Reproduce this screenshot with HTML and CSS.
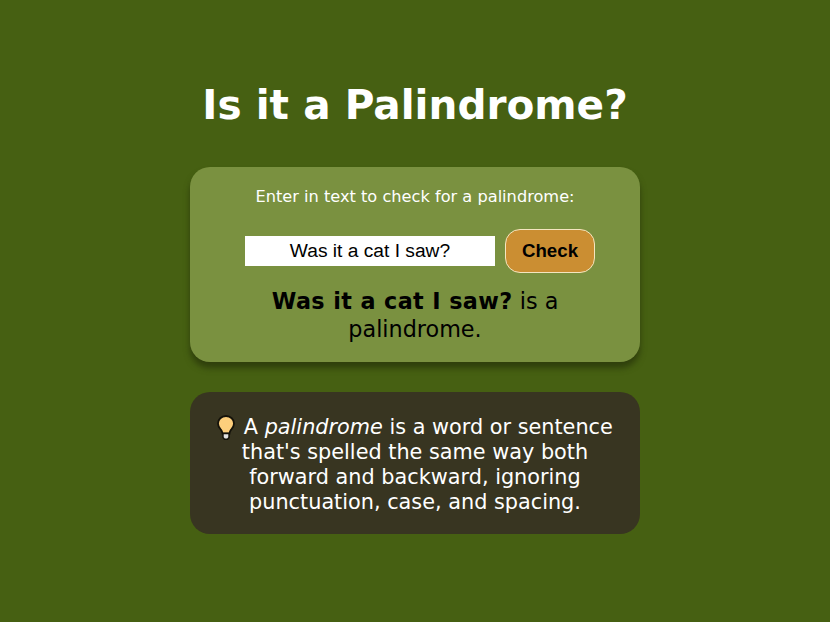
FILE: index.html
```html
<!DOCTYPE html>
<html lang="en">

<head>
    <meta charset="UTF-8">
    <meta name="viewport" content="width=device-width, initial-scale=1.0">
    <title>Palindrome Checker</title>
    <link rel="stylesheet" href="styles.css">
</head>

<body>

    <main class="container">
        <h1 class="title">Is it a Palindrome?</h1>

        <form class="checker">
            <label class="checker-label" for="textInput">Enter in text to check for a palindrome:</label>
            <div class="input-row">
                <input class="text-input" type="text" id="textInput" value="Was it a cat I saw?">
                <button class="check-btn" type="button">Check</button>
            </div>
            <p class="result"><strong>Was it a cat I saw?</strong> is a palindrome.</p>
        </form>

        <div class="info">
            <p class="info-text">
                <svg class="bulb" viewBox="1 0.5 18 25" aria-hidden="true">
                    <path d="M10 1.5C5.3 1.5 2 5 2 9c0 3 1.600 4.600 3 6.400.9 1.200 1.400 2.200 1.500 3.600h7c.1-1.400.6-2.400 1.500-3.600C16.400 13.600 18 12 18 9c0-4-3.300-7.500-8-7.500z" fill="#fdcf7c" stroke="#14120a" stroke-width="1.800"/>
                    <path d="M7 19h6v4l-1.500 1.800h-3L7 23z" fill="#e2e2e2" stroke="#14120a" stroke-width="1.400"/>
                </svg>
                A <em>palindrome</em> is a word or sentence that's spelled the same way both forward and backward, ignoring punctuation, case, and spacing.
            </p>
        </div>
    </main>

</body>

</html>
```

FILE: styles.css
```css
body {
    font-family: "DejaVu Sans", Verdana, sans-serif;
    margin: 0;
    min-height: 622px;
    background-color: #466012;
    color: #fff;
}

.container {
    width: 450px;
    margin: 0 auto;
    padding-top: 81px;
    display: flex;
    flex-direction: column;
    align-items: stretch;
}

.title {
    margin: 0 -100px 37px;
    font-size: 40.6px;
    line-height: 49px;
    font-weight: 700;
    text-align: center;
}

.checker {
    background-color: #7a9140;
    border-radius: 20px;
    box-shadow: 0 6px 6px #2f3f0c;
    padding: 20px 20px 19px;
    text-align: center;
    margin-bottom: 30px;
}

.checker-label {
    display: block;
    font-size: 16.2px;
    line-height: 20px;
    margin-bottom: 22px;
}

.input-row {
    display: flex;
    justify-content: center;
    align-items: center;
    gap: 10px;
    padding-left: 10px;
    margin-bottom: 14px;
}

.text-input {
    width: 250px;
    height: 30px;
    box-sizing: border-box;
    border: 0;
    padding: 0;
    font-family: "Liberation Sans", Arial, sans-serif;
    font-size: 19.2px;
    text-align: center;
    color: #000;
    background-color: #fff;
}

.check-btn {
    width: 90px;
    height: 44px;
    box-sizing: border-box;
    border: 1px solid #f5e6c0;
    border-radius: 15px;
    background-color: #cb8e32;
    color: #000;
    font-family: "Liberation Sans", Arial, sans-serif;
    font-size: 18.7px;
    font-weight: 700;
    cursor: pointer;
}

.result {
    margin: 0;
    font-size: 22.3px;
    line-height: 28px;
    color: #000;
}

.result strong {
    letter-spacing: 0.4px;
}

.info {
    background-color: #383521;
    border-radius: 20px;
    padding: 23px 20px 19px;
    text-align: center;
}

.info-text {
    margin: 0;
    font-size: 20.8px;
    line-height: 25px;
}

.bulb {
    width: 18px;
    height: 25px;
    margin: -5px 2px -5px 0;
    vertical-align: -1px;
}
```
